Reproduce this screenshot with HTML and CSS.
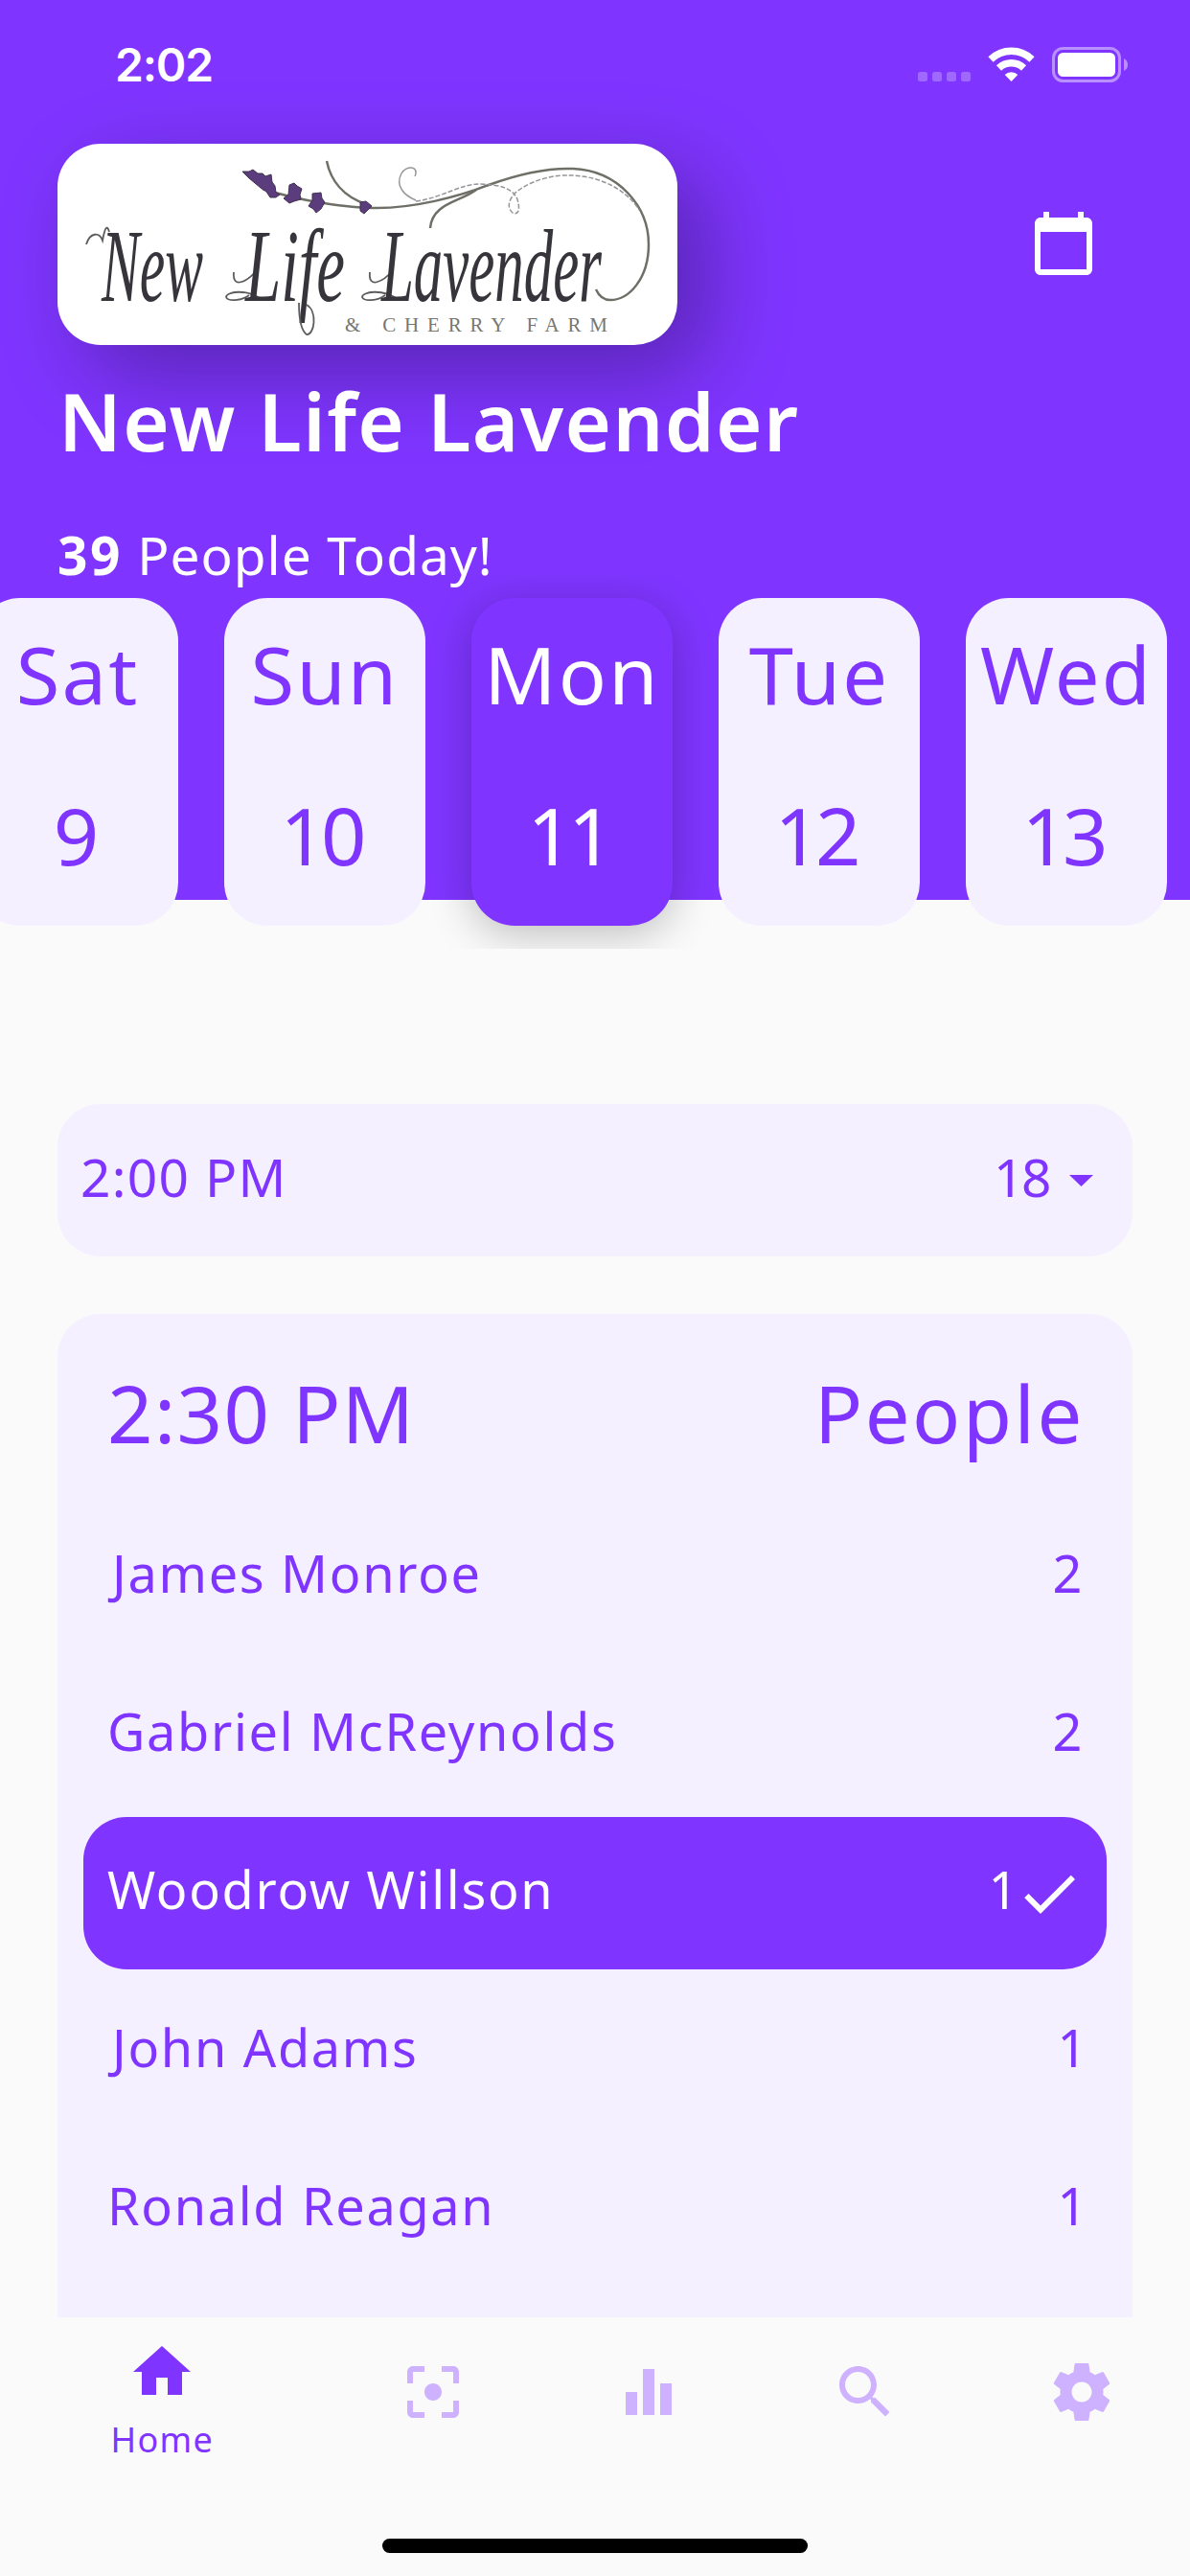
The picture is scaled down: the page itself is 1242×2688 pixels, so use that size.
FILE: index.html
```
<!DOCTYPE html>
<html lang="en">

<head>
    <title>New Life Lavender</title>
    <meta charset="utf-8">
    <link rel="stylesheet" href="styles.css">
</head>

<body>
    <header class="header">
        <div class="statusbar">
            <span class="clock">2:02</span>
            <svg class="status-icons" width="240" height="40" viewBox="0 0 240 40" fill="#fff">
                <g opacity=".25">
                    <rect x="8" y="27" width="10" height="10" rx="2.5" />
                    <rect x="23" y="27" width="10" height="10" rx="2.5" />
                    <rect x="38" y="27" width="10" height="10" rx="2.5" />
                    <rect x="53" y="27" width="10" height="10" rx="2.5" />
                </g>
                <g fill="none" stroke="#fff">
                    <path d="M84 14a31 31 0 0 1 43 0" stroke-width="7.5" />
                    <path d="M92.5 23a19 19 0 0 1 26 0" stroke-width="7.5" />
                </g>
                <path d="M105.5 37l-6.8-7a10 10 0 0 1 13.6 0z" />
                <rect x="149.5" y="2.5" width="69" height="34" rx="10" fill="none" stroke="#fff" stroke-width="3" opacity=".45" />
                <rect x="154" y="7" width="60" height="25" rx="5.5" />
                <path d="M223 13q4 2 4 6.500t-4 6.500z" opacity=".45" />
            </svg>
        </div>

        <div class="brand">
            <div class="logo">
                <svg width="647" height="210" viewBox="0 0 647 210">
                    <!-- lavender stem and flourish -->
                    <g class="stem">
                        <path d="M214 47Q245 57 278 62T329 67C370 68 420 55 450 43C480 32 510 25 538 26C585 28 617 65 617 105C617 140 597 163 577 163Q567 163 562 152" />
                        <path d="M281 18C285 38 298 55 322 63" />
                        <path d="M437 48C420 61 391 62 389 88" />
                    </g>
                    <g class="stem thin">
                        <path d="M373 34C378 23 364 22 359 31C352 44 362 54 374 59" />
                        <path d="M374 60C400 57 422 41 442 42S475 46 480 58C484 72 479 74 475 72C468 66 472 57 478 51C495 37 520 32 536 33C570 34 595 50 607 69" stroke-dasharray="5 2" />
                    </g>
                    <g fill="#5b3c7c" stroke="#41324f" stroke-width="1">
                        <path d="M193 29l7 0 4-2 5 4 5 0 3 3 6-2 1 8 3 4 1 7 4 2-4 3-6 0-4-6-6-4-6-5-6-5z" />
                        <path d="M242 43l5-2 3 3 5 3-2 6 1 5-7 2-5 2-6-5 5-4z" />
                        <path d="M266 52l9-1 1 6 3 4-4 7-5 4-3-4-5-3 4-6z" />
                        <path d="M316 61l6-1 6 5-4 4-4 4-4-3z" />
                    </g>
                    <g class="script">
                        <path class="swash" d="M30 105C34 92 44 92 47 101C50 85 52 85 54 92" />
                        <text x="46" y="164" textLength="106" lengthAdjust="spacingAndGlyphs">New</text>
                        <path class="swash" d="M214 163C196 150 176 155 176 160C178 165 192 164 200 158M184 134C182 152 198 144 208 132" />
                        <text x="196" y="164" textLength="104" lengthAdjust="spacingAndGlyphs">Life</text>
                        <path class="swash" d="M356 163C338 150 318 155 318 160C320 165 334 164 342 158M326 134C324 152 340 144 350 132" />
                        <text x="338" y="164" textLength="230" lengthAdjust="spacingAndGlyphs">Lavender</text>
                        <path class="swash" d="M252 166C252 180 253 194 260 199C268 200 272 175 260 168" />
                    </g>
                    <text class="tagline" x="300" y="196" textLength="274">&amp; CHERRY FARM</text>
                </svg>
            </div>
            <svg class="icon calendar" viewBox="0 0 24 24">
                <path d="M20 3h-1V1h-2v2H7V1H5v2H4c-1.1 0-2 .9-2 2v16c0 1.1.9 2 2 2h16c1.1 0 2-.9 2-2V5c0-1.1-.9-2-2-2zm0 18H4V8h16v13z" />
            </svg>
        </div>

        <h1 class="title">New Life Lavender</h1>
        <p class="people"><b>39</b> People Today!</p>

        <div class="days">
            <div class="day"><span>Sat</span><span class="num">9</span></div>
            <div class="day"><span>Sun</span><span class="num">10</span></div>
            <div class="day active"><span>Mon</span><span class="num">11</span></div>
            <div class="day"><span>Tue</span><span class="num">12</span></div>
            <div class="day"><span>Wed</span><span class="num">13</span></div>
        </div>
    </header>

    <main class="slots">
        <section class="slot">
            <span class="text">2:00 PM</span>
            <span class="text count">18</span>
            <svg width="25" height="12" viewBox="0 0 25 12">
                <path d="M0 0h25L12.5 12z" />
            </svg>
        </section>

        <section class="slot-open">
            <div class="slot-head"><span>2:30 PM</span><span class="label">People</span></div>
            <div class="row"><span class="text hang">James Monroe</span><span class="text">2</span></div>
            <div class="row"><span class="text">Gabriel McReynolds</span><span class="text">2</span></div>
            <div class="row checked">
                <span class="text">Woodrow Willson</span><span class="text one">1</span>
                <svg class="icon" viewBox="0 0 24 24">
                    <path d="M9 16.17L4.83 12l-1.42 1.41L9 19 21 7l-1.41-1.41z" />
                </svg>
            </div>
            <div class="row"><span class="text hang">John Adams</span><span class="text one">1</span></div>
            <div class="row"><span class="text">Ronald Reagan</span><span class="text one">1</span></div>
        </section>
    </main>

    <nav class="tabs">
        <a class="tab current">
            <svg class="icon" viewBox="0 0 24 24">
                <path d="M10 20v-6h4v6h5v-8h3L12 3 2 12h3v8z" />
            </svg>
            Home
        </a>
        <a class="tab">
            <svg class="icon" viewBox="0 0 24 24">
                <path d="M5 15H3v4c0 1.1.9 2 2 2h4v-2H5v-4zM5 5h4V3H5c-1.1 0-2 .9-2 2v4h2V5zm14-2h-4v2h4v4h2V5c0-1.1-.9-2-2-2zm0 16h-4v2h4c1.1 0 2-.9 2-2v-4h-2v4zM12 9c-1.66 0-3 1.34-3 3s1.34 3 3 3 3-1.34 3-3-1.34-3-3-3z" />
            </svg>
        </a>
        <a class="tab">
            <svg class="icon" viewBox="0 0 24 24">
                <path d="M10 20h4V4h-4v16zm-6 0h4v-8H4v8zM16 9v11h4V9h-4z" />
            </svg>
        </a>
        <a class="tab">
            <svg class="icon" viewBox="0 0 24 24">
                <path d="M15.5 14h-.79l-.28-.27C15.41 12.59 16 11.11 16 9.5 16 5.91 13.09 3 9.5 3S3 5.91 3 9.5 5.91 16 9.5 16c1.61 0 3.09-.59 4.23-1.57l.27.28v.79l5 4.99L20.49 19l-4.99-5zm-6 0C7.01 14 5 11.99 5 9.5S7.01 5 9.5 5 14 7.01 14 9.5 11.99 14 9.5 14z" />
            </svg>
        </a>
        <a class="tab">
            <svg class="icon" viewBox="0 0 24 24">
                <path d="M19.43 12.98c.04-.32.07-.64.07-.98s-.03-.66-.07-.98l2.11-1.65c.19-.15.24-.42.12-.64l-2-3.46c-.12-.22-.39-.3-.61-.22l-2.49 1c-.52-.4-1.08-.73-1.69-.98l-.38-2.65C14.46 2.18 14.25 2 14 2h-4c-.25 0-.46.18-.49.42l-.38 2.65c-.61.25-1.17.59-1.69.98l-2.49-1c-.23-.09-.49 0-.61.22l-2 3.46c-.13.22-.07.49.12.64l2.11 1.65c-.04.32-.07.65-.07.98s.03.66.07.98l-2.11 1.65c-.19.15-.24.42-.12.64l2 3.46c.12.22.39.3.61.22l2.49-1c.52.4 1.08.73 1.69.98l.38 2.65c.03.24.24.42.49.42h4c.25 0 .46-.18.49-.42l.38-2.65c.61-.25 1.17-.59 1.69-.98l2.49 1c.23.09.49 0 .61-.22l2-3.46c.12-.22.07-.49-.12-.64l-2.11-1.65zM12 15.5c-1.93 0-3.5-1.57-3.5-3.5s1.57-3.5 3.5-3.5 3.5 1.57 3.5 3.5-1.57 3.5-3.5 3.5z" />
            </svg>
        </a>
    </nav>
    <div class="home-indicator"></div>
</body>

</html>
```
FILE: styles.css
```
* {
    box-sizing: border-box
}

body {
    margin: 0;
    width: 1242px;
    height: 2688px;
    overflow: hidden;
    background: #fafafa;
    color: #7f35ff;
    font-family: "Noto Sans", "Open Sans", sans-serif
}

svg {
    display: block;
    flex: none
}

.icon {
    width: 72px;
    height: 72px;
    fill: currentColor
}

/* header */

.header {
    height: 939px;
    background: #7f35ff;
    color: #fff
}

.statusbar {
    height: 150px;
    padding: 48px 52px 0 120px;
    display: flex;
    justify-content: space-between;
    align-items: flex-start
}

.clock {
    font: 600 48px/40px "Inter", sans-serif;
    letter-spacing: -1.2px
}

.brand {
    height: 210px;
    padding: 0 96px 0 60px;
    display: flex;
    justify-content: space-between
}

.logo {
    width: 647px;
    border-radius: 45px;
    background: #fff;
    box-shadow: 30px 30px 90px rgba(0, 0, 0, .3)
}

.calendar {
    margin-top: 68px
}

.stem {
    fill: none;
    stroke: #6f6f68;
    stroke-width: 2.5
}

.thin {
    stroke: #96969a;
    stroke-width: 1.5
}

.script {
    font: italic 108px "Liberation Serif", serif;
    fill: #37353b
}

.swash {
    fill: none;
    stroke: #5c5b5e;
    stroke-width: 1.8
}

.tagline {
    font: 21px "Liberation Serif", serif;
    fill: #77776f
}

.title {
    margin: 29px 0 0 61px;
    font-size: 83px;
    line-height: 100px;
    font-weight: 600;
    letter-spacing: 1.36px
}

.people {
    margin: 57px 0 0 60px;
    font-size: 55px;
    line-height: 66px;
    letter-spacing: 1px
}

.people b {
    letter-spacing: 2.5px
}

/* the row of days hangs over the bottom edge of the header */

.days {
    height: 390px;
    margin-top: -12px;
    padding: 24px 0 0;
    display: flex;
    gap: 48px;
    overflow: hidden
}

.day {
    flex: none;
    width: 210px;
    height: 342px;
    padding-top: 19px;
    display: flex;
    flex-direction: column;
    align-items: center;
    gap: 48px;
    border-radius: 45px;
    background: #f5f0ff;
    color: #7f35ff;
    font-size: 83px;
    line-height: 120px;
    letter-spacing: 2.2px
}

.day:first-child {
    margin-left: -24px
}

.day .num {
    padding-right: 8px;
    letter-spacing: -5px
}

.day.active {
    background: #7f35ff;
    color: #fff;
    box-shadow: 0 9px 45px rgba(0, 0, 0, .24)
}

/* time slots */

.slots {
    height: 1479px;
    padding: 213px 60px 0;
    display: flex;
    flex-direction: column;
    gap: 60px;
    overflow: hidden
}

.slot {
    flex: none;
    height: 159px;
    padding: 0 41px 0 24px;
    display: flex;
    align-items: center;
    border-radius: 45px;
    background: #f5f0ff;
    font-size: 55px;
    letter-spacing: 1.3px;
    fill: #7f35ff
}

.text {
    padding-bottom: 9px
}

.count {
    margin-left: auto;
    margin-right: 21px;
    letter-spacing: -2.5px
}

.slot-open {
    flex: 1;
    padding: 43px 27px 0;
    border-radius: 45px 45px 0 0;
    background: #f5f0ff
}

.slot-head {
    margin-bottom: 32px;
    padding: 0 23px 0 25px;
    display: flex;
    justify-content: space-between;
    font-size: 83px;
    line-height: 120px;
    letter-spacing: 1.4px
}

.slot-head .label {
    letter-spacing: 2.6px
}

.row {
    height: 159px;
    margin-bottom: 6px;
    padding: 0 24px 0 25px;
    display: flex;
    align-items: center;
    border-radius: 45px;
    font-size: 54px;
    letter-spacing: 1.7px
}

.row .text:first-child {
    margin-right: auto
}

.row .hang {
    margin-left: 5px
}

.row .one {
    margin-right: -5px
}

.row.checked {
    background: #7f35ff;
    color: #fff
}

/* bottom navigation */

.tabs {
    height: 231px;
    display: flex;
    align-items: flex-start
}

.tab {
    flex: 1;
    padding-top: 42px;
    display: flex;
    flex-direction: column;
    align-items: center;
    color: #ceb2ff
}

.tab.current {
    flex: 1.5;
    padding-top: 21px;
    gap: 15px;
    color: #7f35ff;
    font-size: 36px;
    line-height: 40px;
    letter-spacing: 1.3px
}

.home-indicator {
    width: 444px;
    height: 15px;
    margin: 0 auto;
    border-radius: 8px;
    background: #000
}
```
